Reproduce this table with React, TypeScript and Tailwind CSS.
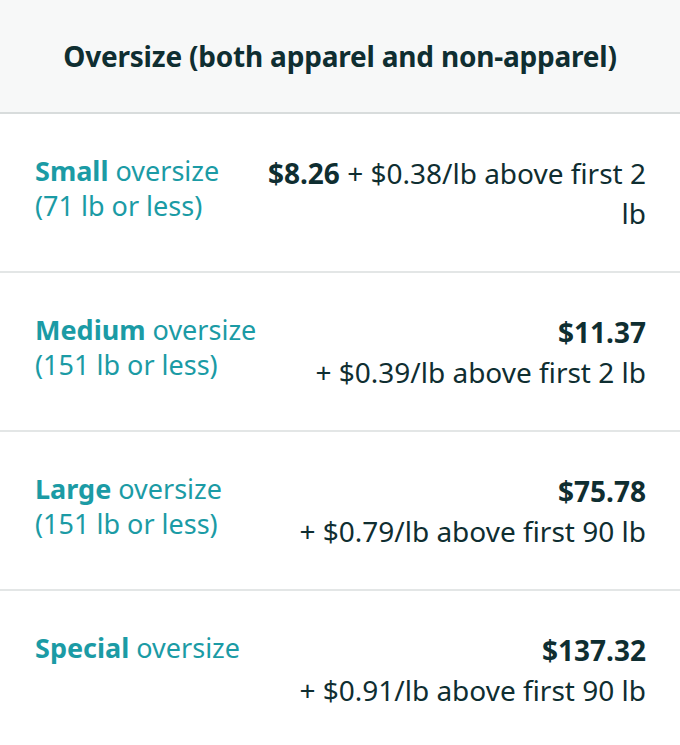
const rows = [
  {
    name: 'Small',
    limit: '(71 lb or less)',
    inline: true,
    price: '$8.26',
    extra: '+ $0.38/lb above first 2',
  },
  {
    name: 'Medium',
    limit: '(151 lb or less)',
    price: '$11.37',
    extra: '+ $0.39/lb above first 2 lb',
  },
  {
    name: 'Large',
    limit: '(151 lb or less)',
    price: '$75.78',
    extra: '+ $0.79/lb above first 90 lb',
  },
  {
    name: 'Special',
    price: '$137.32',
    extra: '+ $0.91/lb above first 90 lb',
  },
];

export default function App() {
  return (
    <div className="w-[680px] h-[745px] overflow-hidden bg-white font-['Noto_Sans',sans-serif] text-[#0f2e31]">
      <div className="h-[114px] flex items-center justify-center bg-[#f7f8f8] border-b-2 border-[#d8dcdc]">
        <h2 className="text-[28px] font-bold tracking-[-0.2px]">Oversize (both apparel and non-apparel)</h2>
      </div>
      {rows.map((r) => (
        <div key={r.name} className="flex justify-between gap-2 pl-[35px] pr-[34px] pt-[39px] pb-[38px] border-b-2 border-[#e3e6e6] last:border-b-0">
          <div className="w-[222px] shrink-0 whitespace-nowrap text-[27px] leading-[35px] text-[#1b9ba5]">
            <span className="font-bold">{r.name}</span> oversize
            {r.limit && <div>{r.limit}</div>}
          </div>
          <div className="text-right text-[28px] leading-[40px] whitespace-nowrap">
            {r.inline ? (
              <>
                <span className="font-bold">{r.price}</span> {r.extra}
                <br />
                lb
              </>
            ) : (
              <>
                <div className="font-bold">{r.price}</div>
                <div>{r.extra}</div>
              </>
            )}
          </div>
        </div>
      ))}
    </div>
  );
}
